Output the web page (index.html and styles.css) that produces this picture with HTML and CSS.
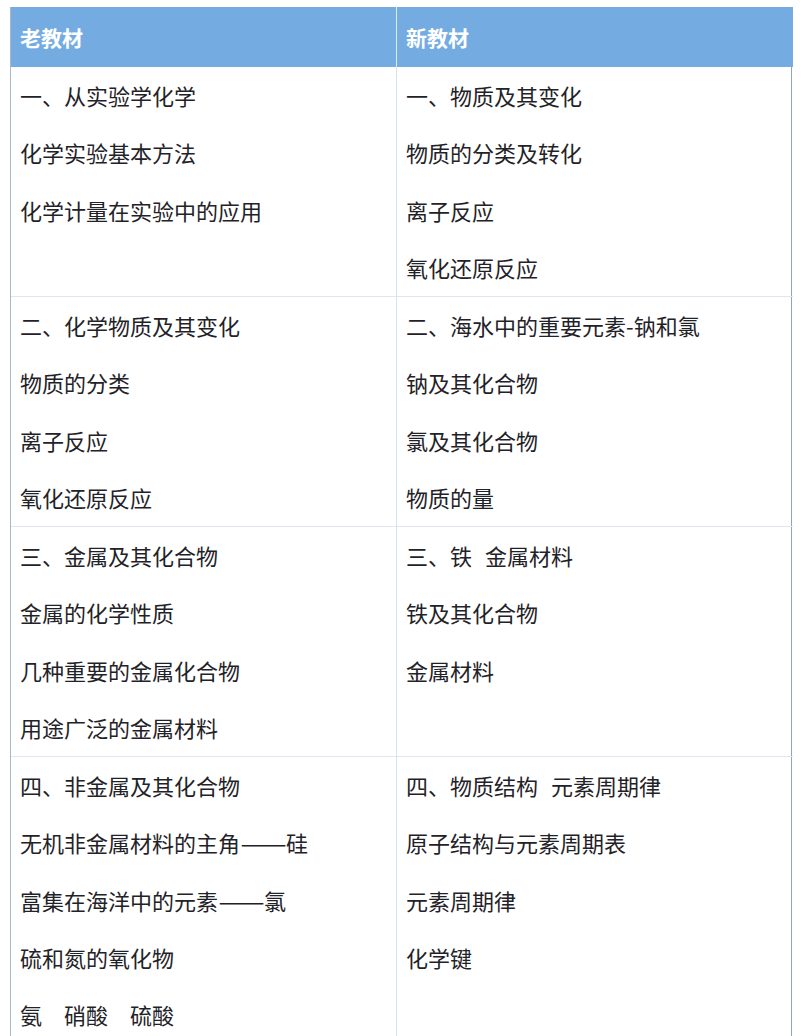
FILE: index.html
```html
<!DOCTYPE html>
<html lang="zh">
<head>
<meta charset="utf-8">
<title>新旧教材对比</title>
<link rel="stylesheet" href="styles.css">
</head>
<body>
<div class="table">
  <div class="head left">老教材</div>
  <div class="head">新教材</div>

  <div class="cell left">
    <div class="line">一、从实验学化学</div>
    <div class="line">化学实验基本方法</div>
    <div class="line">化学计量在实验中的应用</div>
  </div>
  <div class="cell">
    <div class="line">一、物质及其变化</div>
    <div class="line">物质的分类及转化</div>
    <div class="line">离子反应</div>
    <div class="line">氧化还原反应</div>
  </div>

  <div class="cell left">
    <div class="line">二、化学物质及其变化</div>
    <div class="line">物质的分类</div>
    <div class="line">离子反应</div>
    <div class="line">氧化还原反应</div>
  </div>
  <div class="cell">
    <div class="line">二、海水中的重要元素-钠和氯</div>
    <div class="line">钠及其化合物</div>
    <div class="line">氯及其化合物</div>
    <div class="line">物质的量</div>
  </div>

  <div class="cell left">
    <div class="line">三、金属及其化合物</div>
    <div class="line">金属的化学性质</div>
    <div class="line">几种重要的金属化合物</div>
    <div class="line">用途广泛的金属材料</div>
  </div>
  <div class="cell">
    <div class="line">三、铁<span class="sp"></span>金属材料</div>
    <div class="line">铁及其化合物</div>
    <div class="line">金属材料</div>
  </div>

  <div class="cell left last">
    <div class="line">四、非金属及其化合物</div>
    <div class="line">无机非金属材料的主角<span class="dash">——</span>硅</div>
    <div class="line">富集在海洋中的元素<span class="dash">——</span>氯</div>
    <div class="line">硫和氮的氧化物</div>
    <div class="line">氨　硝酸　硫酸</div>
  </div>
  <div class="cell last">
    <div class="line">四、物质结构<span class="sp"></span>元素周期律</div>
    <div class="line">原子结构与元素周期表</div>
    <div class="line">元素周期律</div>
    <div class="line">化学键</div>
  </div>
</div>
</body>
</html>
```

FILE: styles.css
```css
html, body {
  margin: 0;
  padding: 0;
  background: #ffffff;
}

body {
  padding: 7px 0 0 10px;
  font-family: "Noto Sans CJK SC", "Noto Sans", sans-serif;
}

.table {
  display: grid;
  grid-template-columns: 386px 396px;
  width: 782px;
  border-left: 1px solid #a8b8ca;
  border-right: 1px solid #96a4b0;
  box-sizing: border-box;
}

.head {
  height: 60px;
  background: #74ace2;
  color: #ffffff;
  font-weight: 700;
  font-size: 21px;
  line-height: 60px;
  padding-left: 9px;
}

.head.left {
  border-right: 1px solid #dce9f6;
}

.cell {
  border-bottom: 1px solid #dfe6ef;
  padding: 0 0 0 9px;
  height: 229px;
  color: #1f2328;
  font-size: 22px;
}

.cell.last {
  height: auto;
  min-height: 229px;
}

.cell.left {
  border-right: 1px solid #d8e2ef;
}

.line {
  line-height: 57.3px;
  white-space: nowrap;
}

.sp {
  display: inline-block;
  width: 13px;
}

.dash {
  display: inline-block;
  transform: scaleX(1.25);
  margin: 0 4px 0 5px;
}
```
